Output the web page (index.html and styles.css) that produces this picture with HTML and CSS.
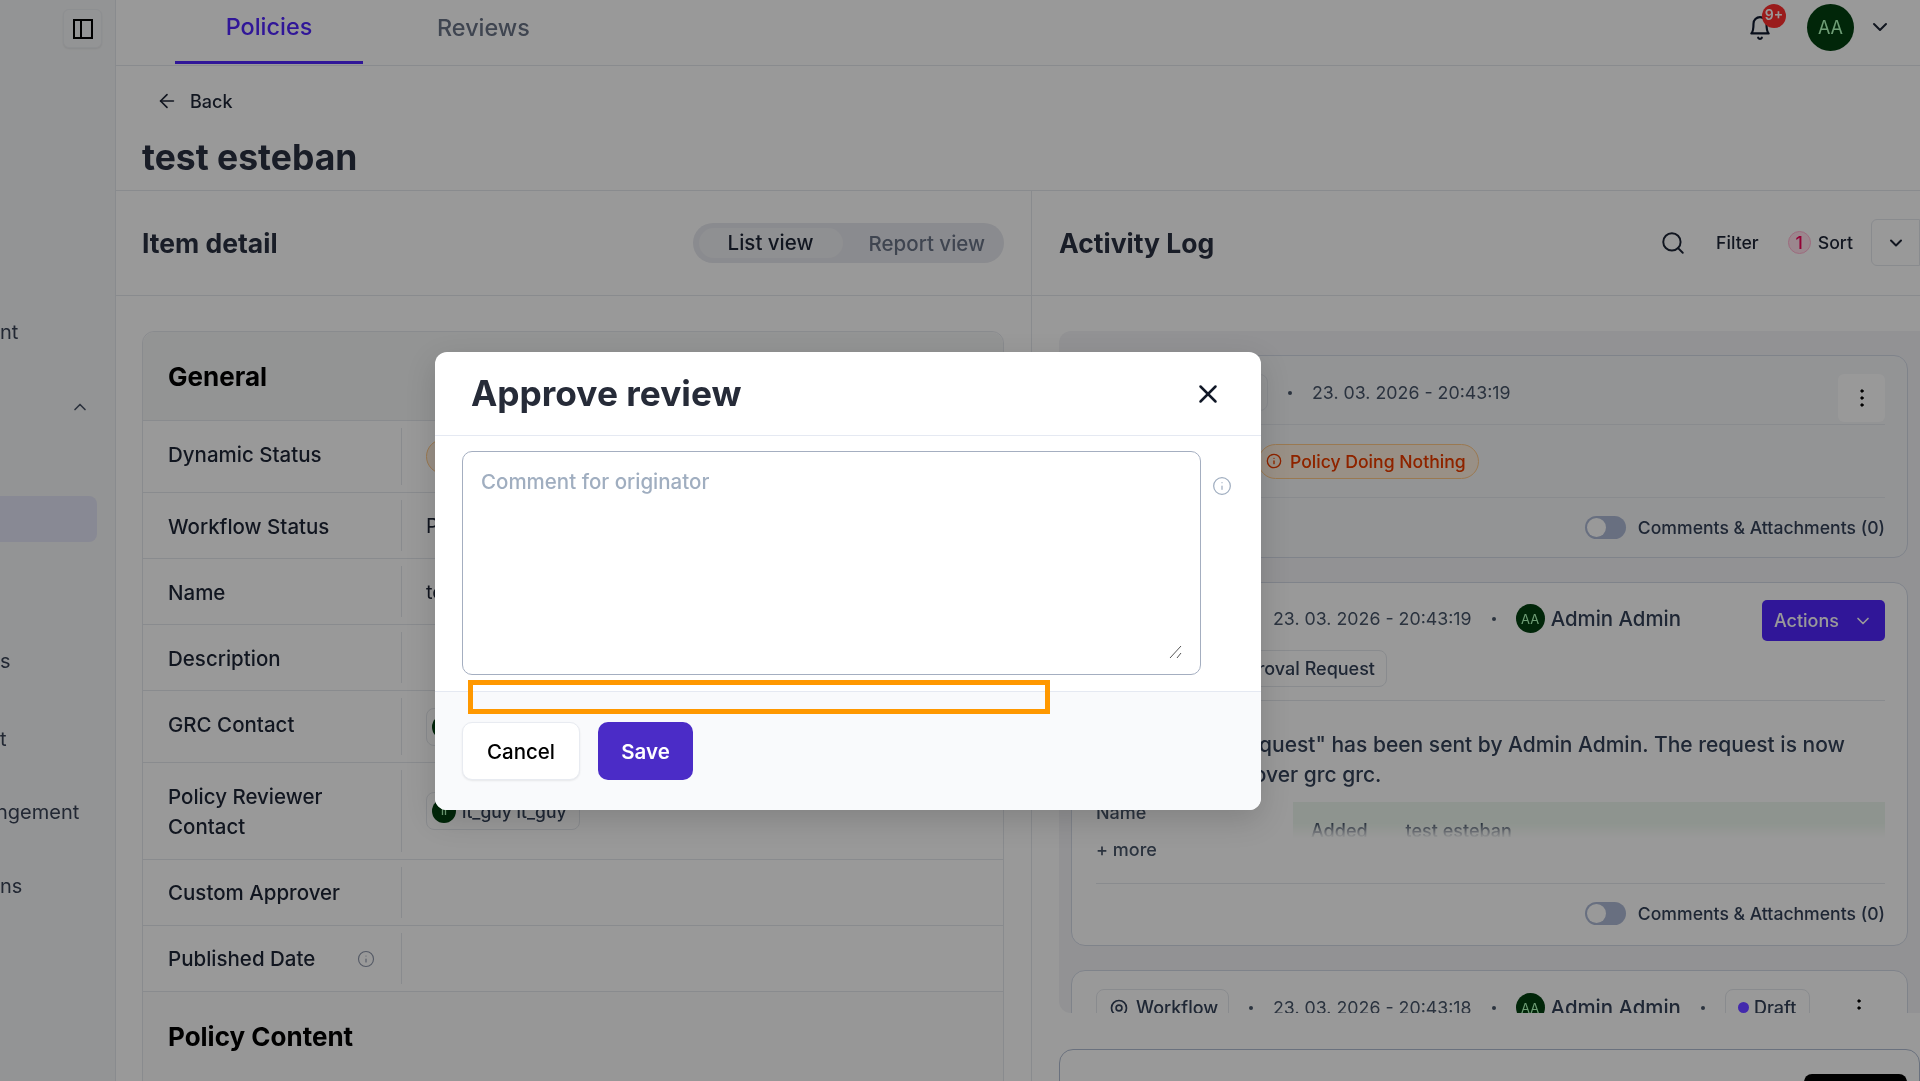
FILE: index.html
```html
<!DOCTYPE html>
<html>
  <head>
    <title>Approve review</title>
    <link rel="stylesheet" href="styles.css">
  </head>
  <body>
    <svg class="sprite" width="0" height="0">
      <symbol id="i-chev" viewBox="0 0 24 24"><path d="m6 9 6 6 6-6"/></symbol>
      <symbol id="i-info" viewBox="0 0 24 24"><circle cx="12" cy="12" r="10"/><path d="M12 16v-4"/><path d="M12 8h.01"/></symbol>
      <symbol id="i-dots" viewBox="0 0 24 24"><circle cx="12" cy="5" r="1.2"/><circle cx="12" cy="12" r="1.2"/><circle cx="12" cy="19" r="1.2"/></symbol>
    </svg>

    <div class="app">
      <aside class="sidebar">
        <div class="side-top">
          <button class="panel-btn">
            <svg class="ico-panel" viewBox="0 0 24 24"><rect x="3" y="3" width="18" height="18"/><path d="M10 3v18"/></svg>
          </button>
        </div>
        <div class="nav nav-1">nt</div>
        <div class="nav nav-2"><svg class="ico nav-chev" viewBox="0 0 24 24"><path d="m18 15-6-6-6 6"/></svg></div>
        <div class="nav nav-active"></div>
        <div class="nav nav-3">s</div>
        <div class="nav nav-4">t</div>
        <div class="nav nav-5">ngement</div>
        <div class="nav nav-6">ns</div>
      </aside>

      <main class="main">
        <header class="topbar">
          <div class="tabs">
            <div class="tab tab-on">Policies</div>
            <div class="tab">Reviews</div>
          </div>
          <div class="user">
            <div class="bell">
              <svg class="ico ico-bell" viewBox="0 0 24 24"><path d="M6 8a6 6 0 0 1 12 0c0 7 2 9 2 9H4s2-2 2-9"/><path d="M10.3 21a1.94 1.94 0 0 0 3.4 0"/></svg>
              <span class="bell-badge">9+</span>
            </div>
            <div class="avatar avatar-lg">AA</div>
            <svg class="ico ico-chev"><use href="#i-chev"/></svg>
          </div>
        </header>

        <div class="page-head">
          <div class="back">
            <svg class="ico ico-back" viewBox="0 0 24 24"><path d="m12 19-7-7 7-7"/><path d="M19 12H5"/></svg>
            Back
          </div>
          <h1 class="page-title">test esteban</h1>
        </div>

        <div class="split">
          <section class="col col-left">
            <div class="col-head">
              <h2>Item detail</h2>
              <div class="switch">
                <span class="switch-on">List view</span>
                <span class="switch-off">Report view</span>
              </div>
            </div>
            <div class="col-body">
              <div class="detail">
                <h3 class="detail-title">General</h3>
                <div class="row row-72">
                  <div class="row-label">Dynamic Status</div>
                  <div class="row-value"><span class="chip chip-warn chip-left">Policy Doing Nothing</span></div>
                </div>
                <div class="row">
                  <div class="row-label">Workflow Status</div>
                  <div class="row-value">Published</div>
                </div>
                <div class="row">
                  <div class="row-label">Name</div>
                  <div class="row-value">test esteban</div>
                </div>
                <div class="row">
                  <div class="row-label">Description</div>
                  <div class="row-value"></div>
                </div>
                <div class="row row-72">
                  <div class="row-label">GRC Contact</div>
                  <div class="row-value"><span class="chip chip-person"><span class="avatar avatar-sm">GG</span>grc grc</span></div>
                </div>
                <div class="row row-97">
                  <div class="row-label">Policy Reviewer<br>Contact</div>
                  <div class="row-value"><span class="chip chip-person"><span class="avatar avatar-sm">II</span>it_guy it_guy</span></div>
                </div>
                <div class="row row-low">
                  <div class="row-label">Custom Approver</div>
                  <div class="row-value"></div>
                </div>
                <div class="row row-low">
                  <div class="row-label row-label-info">Published Date <svg class="ico ico-info-grey"><use href="#i-info"/></svg></div>
                  <div class="row-value"></div>
                </div>
                <h3 class="detail-title detail-title-2">Policy Content</h3>
              </div>
            </div>
          </section>

          <section class="col col-right">
            <div class="col-head">
              <h2>Activity Log</h2>
              <div class="log-tools">
                <svg class="ico ico-search" viewBox="0 0 24 24"><circle cx="11" cy="11" r="8"/><path d="m21 21-4.3-4.3"/></svg>
                <span class="tool-filter">Filter</span>
                <span class="count">1</span>
                <span class="tool-sort">Sort</span>
                <button class="tool-more"><svg class="ico ico-chev-sm"><use href="#i-chev"/></svg></button>
              </div>
            </div>
            <div class="col-body col-body-log">
              <div class="log">
                <article class="card card-1">
                  <div class="card-head">
                    <span class="chip chip-type chip-wide"></span>
                    <span class="dot"></span>
                    <span class="date">23. 03. 2026 - 20:43:19</span>
                    <button class="kebab"><svg class="ico ico-dots"><use href="#i-dots"/></svg></button>
                  </div>
                  <div class="card-status">
                    <span class="chip chip-warn"><svg class="ico ico-warn"><use href="#i-info"/></svg>Policy Doing Nothing</span>
                  </div>
                  <div class="card-foot">
                    <span class="toggle"><span class="knob"></span></span>
                    Comments &amp; Attachments (0)
                  </div>
                </article>

                <article class="card card-2">
                  <div class="card-head card-head-2">
                    <span class="chip chip-type">Workflow</span>
                    <span class="dot"></span>
                    <span class="date">23. 03. 2026 - 20:43:19</span>
                    <span class="dot"></span>
                    <span class="avatar avatar-xs">AA</span>
                    <span class="who">Admin Admin</span>
                    <button class="actions">Actions <svg class="ico ico-chev-act"><use href="#i-chev"/></svg></button>
                  </div>
                  <div class="card-req"><span class="chip chip-req">Approval Request</span></div>
                  <p class="card-text">An "Approval Request" has been sent by Admin Admin. The request is now<br>pending at approver grc grc.</p>
                  <div class="diff">
                    <div class="diff-name">Name</div>
                    <div class="diff-box"><span class="diff-added">Added</span><span>test esteban</span></div>
                  </div>
                  <div class="more">+ more</div>
                  <div class="card-foot card-foot-2">
                    <span class="toggle"><span class="knob"></span></span>
                    Comments &amp; Attachments (0)
                  </div>
                </article>

                <article class="card card-3">
                  <div class="card-head card-head-3">
                    <span class="chip chip-type">
                      <svg class="ico ico-flow" viewBox="0 0 24 24"><circle cx="12" cy="12" r="9"/><circle cx="12" cy="12" r="3.5"/></svg>
                      Workflow
                    </span>
                    <span class="dot"></span>
                    <span class="date">23. 03. 2026 - 20:43:18</span>
                    <span class="dot"></span>
                    <span class="avatar avatar-xs">AA</span>
                    <span class="who">Admin Admin</span>
                    <span class="dot"></span>
                    <span class="chip chip-draft"><span class="draft-dot"></span>Draft</span>
                    <svg class="ico ico-dots ico-dots-3"><use href="#i-dots"/></svg>
                  </div>
                </article>
              </div>
              <div class="composer"><button class="composer-btn"></button></div>
            </div>
          </section>
        </div>
      </main>
    </div>

    <div class="overlay"></div>

    <div class="modal">
      <div class="modal-head">
        <h2>Approve review</h2>
        <svg class="ico ico-close" viewBox="0 0 24 24"><path d="M18 6 6 18"/><path d="m6 6 12 12"/></svg>
      </div>
      <div class="modal-body">
        <textarea class="comment" placeholder="Comment for originator"></textarea>
        <svg class="ico ico-info-modal"><use href="#i-info"/></svg>
        <svg class="grip" viewBox="0 0 14 14"><path d="M1 13 12 1"/><path d="M8 13 12 8"/></svg>
      </div>
      <div class="modal-foot">
        <button class="btn btn-cancel">Cancel</button>
        <button class="btn btn-save">Save</button>
      </div>
      <div class="highlight"></div>
    </div>
  </body>
</html>
```

FILE: styles.css
```css
* {
  box-sizing: border-box;
}
html, body {
  height: 100%;
  margin: 0;
  overflow: hidden;
}
body {
  font-family: "Inter", "Liberation Sans", sans-serif;
  font-size: 20px;
  color: #1f2430;
  background: #fff;
}
button {
  font-family: inherit;
  cursor: pointer;
}
h1, h2, h3, p {
  margin: 0;
}
.sprite {
  display: block;
}
.ico {
  fill: none;
  stroke: currentColor;
  stroke-width: 2;
  stroke-linecap: round;
  stroke-linejoin: round;
  flex: none;
}

.app {
  display: flex;
  height: 1081px;
}

/* sidebar */
.sidebar {
  width: 116px;
  flex: none;
  background: #f6f7f8;
  border-right: 1px solid #e5e7eb;
  color: #3b4250;
  overflow: hidden;
}
.side-top {
  display: flex;
  justify-content: flex-end;
  padding: 9px 13px 0 0;
  height: 48px;
}
.panel-btn {
  width: 39px;
  height: 39px;
  padding: 0;
  display: flex;
  align-items: center;
  justify-content: center;
  background: #f6f7f8;
  border: 1px solid #eceef1;
  border-radius: 6px;
  box-shadow: 0 1px 2px rgba(0, 0, 0, .08);
}
.ico-panel {
  width: 24px;
  height: 24px;
  fill: none;
  stroke: #000;
  stroke-width: 2;
}
.nav {
  height: 30px;
  line-height: 30px;
  white-space: nowrap;
}
.nav-1 { margin-top: 269px; }
.nav-2 {
  margin-top: 45px;
  padding-left: 70px;
  display: flex;
  align-items: center;
}
.nav-chev {
  width: 20px;
  height: 20px;
  color: #4b5260;
}
.nav-active {
  margin-top: 74px;
  width: 97px;
  height: 46px;
  background: #e3e4f1;
  border-radius: 0 8px 8px 0;
}
.nav-3 { margin-top: 104px; }
.nav-4 { margin-top: 48px; }
.nav-5 {
  margin-top: 43px;
  margin-left: -4px;
}
.nav-6 { margin-top: 44px; }

/* main */
.main {
  flex: 1;
  min-width: 0;
  display: flex;
  flex-direction: column;
}
.topbar {
  height: 66px;
  flex: none;
  display: flex;
  justify-content: space-between;
  border-bottom: 1px solid #e5e7eb;
}
.tabs {
  display: flex;
  margin-left: 59px;
  font-size: 23.4px;
  font-weight: 500;
}
.tab {
  color: #6b7280;
  height: 64px;
  padding-top: 13px;
  margin-left: 74px;
}
.tab-on {
  width: 188px;
  margin-left: 0;
  text-align: center;
  color: #4b2cc7;
  padding-top: 12px;
  border-bottom: 3px solid #4b2cc7;
}
.user {
  display: flex;
  align-items: flex-start;
  padding-right: 28px;
}
.bell {
  position: relative;
  margin-top: 15px;
  color: #111827;
}
.ico-bell {
  display: block;
  width: 26px;
  height: 26px;
}
.bell-badge {
  position: absolute;
  left: 15px;
  top: -11px;
  width: 24px;
  height: 24px;
  border-radius: 50%;
  background: #d23c3c;
  color: #fff;
  font-size: 14px;
  font-weight: 600;
  line-height: 22px;
  text-align: center;
}
.avatar {
  display: inline-flex;
  align-items: center;
  justify-content: center;
  border-radius: 50%;
  background: #0e3a18;
  color: #c8ffd0;
  flex: none;
}
.avatar-lg {
  width: 47px;
  height: 47px;
  margin: 4px 0 0 34px;
  font-size: 18px;
}
.ico-chev {
  width: 24px;
  height: 24px;
  margin: 15px 0 0 14px;
  color: #1f2430;
}

.page-head {
  height: 125px;
  flex: none;
  padding: 21px 0 0 26px;
  border-bottom: 1px solid #e5e7eb;
}
.back {
  display: flex;
  align-items: center;
  gap: 12px;
  height: 28px;
  margin-left: 14px;
  font-size: 18px;
  font-weight: 500;
}
.ico-back {
  width: 22px;
  height: 22px;
  stroke-width: 1.8;
}
.page-title {
  margin-top: 21px;
  font-size: 35.5px;
  line-height: 44px;
  font-weight: 700;
  color: #2b303c;
}

.split {
  flex: 1;
  min-height: 0;
  display: flex;
}
.col {
  display: flex;
  flex-direction: column;
  min-width: 0;
}
.col-left {
  width: 916px;
  flex: none;
  border-right: 1px solid #e5e7eb;
}
.col-right {
  flex: 1;
}
.col-head {
  height: 105px;
  flex: none;
  display: flex;
  align-items: center;
  justify-content: space-between;
  padding: 0 27px 0 26px;
  border-bottom: 1px solid #e5e7eb;
}
.col-head h2 {
  font-size: 26.5px;
  font-weight: 700;
  color: #2b303c;
}
.col-right .col-head {
  padding: 0 0 0 27px;
}
.switch {
  display: flex;
  align-items: center;
  height: 40px;
  padding: 0 19px 0 6px;
  border-radius: 20px;
  background: #e7e8ec;
}
.switch-on {
  width: 144px;
  height: 30px;
  line-height: 30px;
  text-align: center;
  font-weight: 500;
  font-size: 20.5px;
  background: #eff0f2;
  border-radius: 15px;
}
.switch-off {
  margin-left: 26px;
  color: #6b7280;
  font-weight: 500;
  font-size: 20.5px;
}
.col-body {
  flex: 1;
  min-height: 0;
  padding: 35px 27px 0 26px;
  overflow: hidden;
}

/* item detail */
.detail {
  border: 1px solid #e5e7eb;
  border-radius: 12px 12px 0 0;
  background: #fff;
}
.detail-title {
  height: 89px;
  padding: 29px 0 0 25px;
  font-size: 26px;
  font-weight: 700;
  color: #000;
  background: #f5f6f7;
  border-radius: 12px 12px 0 0;
  border-bottom: 1px solid #e5e7eb;
}
.detail-title-2 {
  height: 92px;
  border-radius: 0;
  border-bottom: 0;
  padding-top: 29px;
  background: #fbfbfc;
}
.row {
  height: 66px;
  padding: 7px 0;
  display: flex;
  border-bottom: 1px solid #e5e7eb;
  font-weight: 500;
}
.row-72 { height: 72px; }
.row-97 { height: 97px; }
.row-label {
  width: 258px;
  flex: none;
  padding: 2px 0 0 25px;
  display: flex;
  align-items: center;
  line-height: 30px;
  font-size: 20.5px;
}
.row-72 .row-label {
  padding-top: 0;
  padding-bottom: 4px;
}
.row-low .row-label {
  padding-top: 0;
}
.row-label-info {
  justify-content: space-between;
  padding-right: 26px;
}
.row-value {
  flex: 1;
  padding-left: 24px;
  border-left: 1px solid #e5e7eb;
  display: flex;
  align-items: center;
  font-weight: 400;
}
.ico-info-grey {
  width: 18px;
  height: 18px;
  stroke-width: 1.5;
  color: #8f95a3;
}

/* chips */
.chip {
  display: inline-flex;
  align-items: center;
  font-size: 18px;
  font-weight: 500;
  white-space: nowrap;
  border: 1px solid #e5e7eb;
  border-radius: 8px;
}
.chip-warn {
  height: 35px;
  padding: 0 12px 0 7px;
  gap: 8px;
  font-size: 17.6px;
  color: #c2410c;
  background: #fbf0e4;
  border: 1.5px solid #f3cb9c;
  border-radius: 18px;
}
.chip-left {
  padding-left: 40px;
}
.chip-person {
  height: 38px;
  padding: 0 13px 0 5px;
  gap: 6px;
  font-size: 17.5px;
  color: #374151;
}
.avatar-sm {
  width: 24px;
  height: 24px;
  font-size: 11px;
}
.ico-warn {
  width: 16px;
  height: 16px;
}

/* activity log */
.col-body-log {
  padding: 35px 0 0 27px;
}
.log {
  height: 682px;
  padding: 24px 12px 0 12px;
  background: #f3f4f6;
  border-radius: 12px 0 0 12px;
  overflow: hidden;
}
.log-tools {
  display: flex;
  align-items: center;
  font-size: 17.7px;
  font-weight: 500;
  margin-top: -1px;
}
.ico-search {
  width: 26px;
  height: 26px;
  stroke-width: 1.8;
}
.tool-filter { margin-left: 30px; }
.count {
  width: 23px;
  height: 23px;
  margin-left: 29px;
  border-radius: 50%;
  border: 1px solid #f3b8cf;
  background: #fbe4ec;
  color: #c0104f;
  text-align: center;
  line-height: 21px;
}
.tool-sort { margin-left: 7px; }
.tool-more {
  width: 49px;
  height: 47px;
  margin-left: 18px;
  padding: 0 0 0 1px;
  display: flex;
  align-items: center;
  justify-content: center;
  background: #fff;
  border: 1px solid #e5e7eb;
  border-radius: 6px 0 0 6px;
  color: #1f2430;
}
.ico-chev-sm {
  width: 20px;
  height: 20px;
  stroke-width: 2.4;
}
.card {
  background: #fff;
  border: 1px solid #d6dae3;
  border-radius: 14px;
  padding: 0 22px 0 24px;
  margin-bottom: 24px;
  font-size: 18px;
}
.card-1 {
  height: 203px;
  background: #f5f6f8;
}
.card-2 { height: 364px; }
.card-3 { height: 90px; }
.card-head {
  display: flex;
  align-items: center;
  height: 69px;
  padding-top: 18px;
  padding-bottom: 3px;
  border-bottom: 1px solid #e5e7eb;
}
.card-1 .card-head .chip,
.card-1 .dot,
.card-1 .date {
  margin-bottom: 10px;
}
.chip-type {
  height: 37px;
  width: 133px;
  padding-left: 12px;
  gap: 7px;
  color: #374151;
}
.chip-wide {
  width: 172px;
}
.dot {
  width: 4px;
  height: 4px;
  margin: 0 20px 0 20px;
  border-radius: 50%;
  background: #4b5563;
  flex: none;
}
.date {
  color: #4b5563;
  font-size: 17.8px;
  font-weight: 400;
  white-space: nowrap;
}
.kebab {
  width: 47px;
  height: 48px;
  margin-left: auto;
  padding: 0;
  display: flex;
  align-items: center;
  justify-content: center;
  background: #fff;
  border: 0;
  border-radius: 6px;
  color: #000;
}
.ico-dots {
  width: 24px;
  height: 24px;
  fill: currentColor;
  stroke-width: 1;
}
.card-status {
  height: 73px;
  padding-left: 162px;
  display: flex;
  align-items: center;
  border-bottom: 1px solid #e5e7eb;
}
.card-foot {
  height: 59px;
  display: flex;
  align-items: center;
  justify-content: flex-end;
  gap: 12px;
  font-size: 17.6px;
  font-weight: 500;
  color: #374151;
}
.toggle {
  display: flex;
  align-items: center;
  width: 41px;
  height: 23px;
  padding: 0 2px;
  border-radius: 12px;
  background: #b0b9cd;
}
.knob {
  width: 19px;
  height: 19px;
  border-radius: 50%;
  background: #fff;
}
.card-head-2 {
  height: auto;
  padding: 17px 0 0;
  border-bottom: 0;
}
.card-head-2 .date,
.card-head-2 .dot,
.card-head-2 .who,
.card-head-2 .avatar {
  margin-bottom: 4px;
}
.avatar-xs {
  width: 29px;
  height: 29px;
  font-size: 13px;
}
.who {
  margin-left: 6px;
  font-size: 20.4px;
  font-weight: 500;
  color: #374151;
  white-space: nowrap;
}
.actions {
  margin-left: auto;
  width: 123px;
  height: 41px;
  display: flex;
  align-items: center;
  justify-content: center;
  gap: 14px;
  border: 0;
  border-radius: 5px;
  background: #4b2cc7;
  color: #fff;
  font-size: 18px;
  font-weight: 500;
}
.ico-chev-act {
  width: 20px;
  height: 20px;
}
.card-req {
  height: 60px;
  padding-top: 9px;
  border-bottom: 1px solid #e5e7eb;
}
.chip-req {
  width: 291px;
  height: 37px;
  padding-right: 11px;
  justify-content: flex-end;
  color: #374151;
}
.card-text {
  margin-top: 29px;
  font-size: 21px;
  font-weight: 500;
  line-height: 30px;
  color: #374151;
}
.diff {
  display: flex;
  height: 36px;
  margin-top: 12px;
  overflow: hidden;
  -webkit-mask-image: linear-gradient(#000 60%, transparent);
  mask-image: linear-gradient(#000 60%, transparent);
  color: #4b5563;
  font-weight: 500;
}
.diff-name {
  width: 197px;
  flex: none;
  padding-top: 0;
}
.diff-box {
  flex: 1;
  height: 50px;
  padding: 18px 18px 0;
  display: flex;
  gap: 38px;
  background: #eff6f0;
}
.more {
  height: 24px;
  line-height: 24px;
  color: #4b5563;
  font-weight: 500;
}
.card-foot-2 {
  margin-top: 21px;
  border-top: 1px solid #e5e7eb;
}
.card-head-3 {
  height: auto;
  padding-top: 18px;
  border-bottom: 0;
}
.ico-flow {
  width: 20px;
  height: 20px;
}
.chip-draft {
  width: 85px;
  height: 37px;
  padding-left: 12px;
  gap: 5px;
  color: #374151;
}
.draft-dot {
  width: 11px;
  height: 11px;
  border-radius: 50%;
  background: #6a4be8;
}
.ico-dots-3 {
  margin-left: 37px;
  color: #000;
}
.composer {
  height: 80px;
  margin-top: 36px;
  padding: 24px 12px 0 0;
  display: flex;
  justify-content: flex-end;
  border: 1px solid #b4bccb;
  border-radius: 14px 14px 0 0;
}
.composer-btn {
  width: 103px;
  height: 40px;
  background: #000;
  border: 0;
  border-radius: 8px;
}

/* dim layer and dialog */
.overlay {
  position: fixed;
  inset: 0;
  -webkit-backdrop-filter: brightness(.6) saturate(1.4);
  backdrop-filter: brightness(.6) saturate(1.4);
}
.modal {
  position: absolute;
  left: 435px;
  top: 352px;
  width: 826px;
  height: 458px;
  background: #fff;
  border-radius: 12px;
  overflow: hidden;
  box-shadow: 0 10px 30px rgba(0, 0, 0, .15);
}
.modal-head {
  height: 84px;
  padding: 0 43px 0 36px;
  display: flex;
  align-items: center;
  justify-content: space-between;
  border-bottom: 1px solid #e5e9f2;
}
.modal-head h2 {
  font-size: 35.3px;
  font-weight: 700;
  color: #262b38;
  margin-top: -1px;
}
.ico-close {
  width: 30px;
  height: 30px;
  margin-right: -5px;
  color: #111827;
  stroke-width: 2;
}
.modal-body {
  height: 255px;
  padding: 15px 0 0 27px;
  display: flex;
  gap: 11px;
}
.comment {
  width: 739px;
  height: 224px;
  flex: none;
  padding: 16px 18px;
  border: 1.5px solid #a4aec0;
  border-radius: 10px;
  background: #fff;
  font-family: inherit;
  font-size: 20.5px;
  line-height: 28px;
  outline: none;
  resize: none;
}
.comment::placeholder {
  color: #a0aec0;
  font-weight: 500;
}
.ico-info-modal {
  width: 20px;
  height: 20px;
  margin-top: 25px;
  stroke-width: 1.5;
  color: #a0aec0;
}
.grip {
  position: absolute;
  left: 734px;
  top: 293px;
  width: 14px;
  height: 14px;
  fill: none;
  stroke: #555;
  stroke-width: 1;
}
.modal-foot {
  height: 119px;
  padding: 30px 0 0 27px;
  display: flex;
  align-items: flex-start;
  gap: 18px;
  background: #f9fafc;
  border-top: 1px solid #e5e9f2;
}
.btn {
  height: 58px;
  border-radius: 10px;
  font-size: 20.5px;
  font-weight: 500;
}
.btn-cancel {
  width: 118px;
  color: #000;
  background: #fff;
  border: 1px solid #e8ebf1;
  box-shadow: 0 1px 2px rgba(0, 0, 0, .08);
}
.btn-save {
  width: 95px;
  color: #fff;
  background: #4b2cc7;
  border: 0;
  font-weight: 600;
}
.highlight {
  position: absolute;
  left: 33px;
  top: 328px;
  width: 582px;
  height: 34px;
  border: 5px solid #ff9800;
}
```
